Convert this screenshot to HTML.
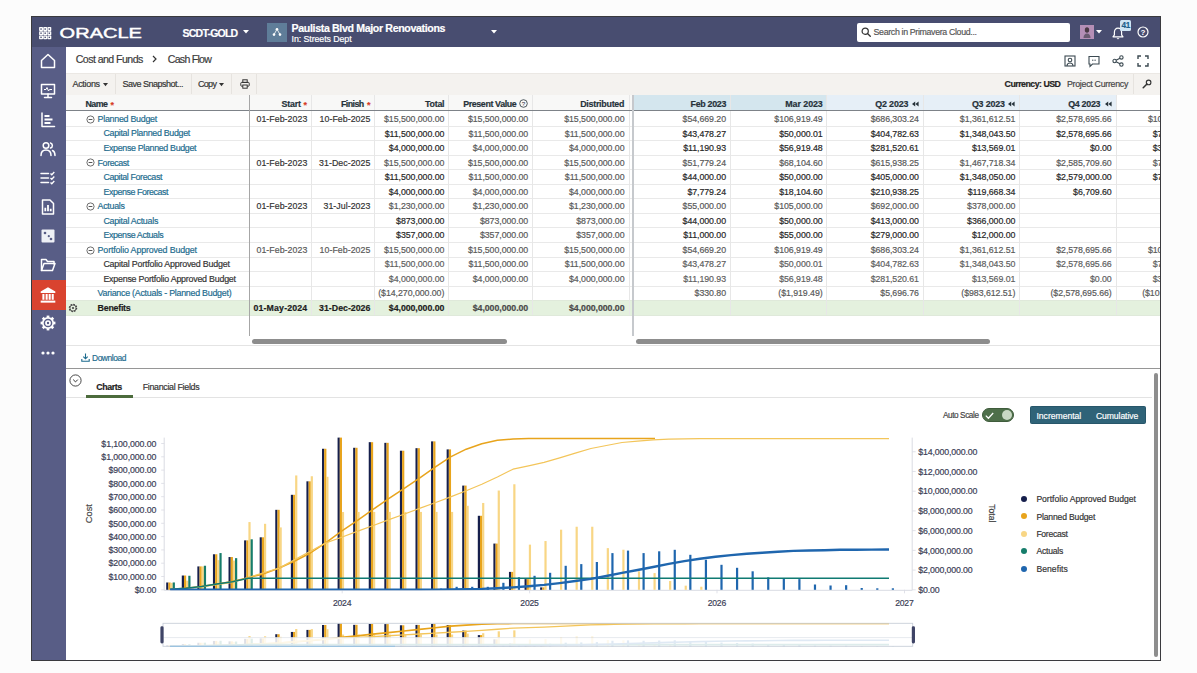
<!DOCTYPE html><html lang="en"><head><meta charset="utf-8"><title>Cash Flow - Primavera Cloud</title><style>
*{box-sizing:border-box;margin:0;padding:0}
html,body{width:1197px;height:673px;overflow:hidden;background:#fcfcfc}
body{font-family:"Liberation Sans",sans-serif;font-size:9px;color:#222;position:relative}
.abs{position:absolute}
#frame{position:absolute;left:31px;top:16px;width:1130px;height:645px;background:#fff;border:1px solid #3a3a3e;overflow:hidden}
/* coordinates inside #frame are page coords minus (32,17) */
#hdr{position:absolute;left:0;top:0;width:1128px;height:30px;background:#484d70}
#side{position:absolute;left:0;top:30px;width:33.5px;height:613px;background:#585d86}
.t{position:absolute;white-space:nowrap;line-height:1;-webkit-text-stroke:0.18px currentColor}
.r{text-align:right}
.b{font-weight:bold}
.num{letter-spacing:-0.45px}
.txt{letter-spacing:-0.28px}
.lnk{color:#1b6a8c}
svg{position:absolute;overflow:visible}
</style></head><body>
<div id="frame">
<div id="hdr"></div><div id="side"></div>
<svg style="left:6.70px;top:10.10px" width="12.4" height="12.4" viewBox="0 0 12.4 12.4" ><rect x="0.10" y="0.10" width="3.9" height="3.9" rx="0.7" fill="#fff"/><rect x="1.35" y="1.35" width="1.4" height="1.4" fill="#484d70"/><rect x="0.10" y="4.25" width="3.9" height="3.9" rx="0.7" fill="#fff"/><rect x="1.35" y="5.50" width="1.4" height="1.4" fill="#484d70"/><rect x="0.10" y="8.40" width="3.9" height="3.9" rx="0.7" fill="#fff"/><rect x="1.35" y="9.65" width="1.4" height="1.4" fill="#484d70"/><rect x="4.25" y="0.10" width="3.9" height="3.9" rx="0.7" fill="#fff"/><rect x="5.50" y="1.35" width="1.4" height="1.4" fill="#484d70"/><rect x="4.25" y="4.25" width="3.9" height="3.9" rx="0.7" fill="#fff"/><rect x="5.50" y="5.50" width="1.4" height="1.4" fill="#484d70"/><rect x="4.25" y="8.40" width="3.9" height="3.9" rx="0.7" fill="#fff"/><rect x="5.50" y="9.65" width="1.4" height="1.4" fill="#484d70"/><rect x="8.40" y="0.10" width="3.9" height="3.9" rx="0.7" fill="#fff"/><rect x="9.65" y="1.35" width="1.4" height="1.4" fill="#484d70"/><rect x="8.40" y="4.25" width="3.9" height="3.9" rx="0.7" fill="#fff"/><rect x="9.65" y="5.50" width="1.4" height="1.4" fill="#484d70"/><rect x="8.40" y="8.40" width="3.9" height="3.9" rx="0.7" fill="#fff"/><rect x="9.65" y="9.65" width="1.4" height="1.4" fill="#484d70"/></svg>
<svg style="left:27px;top:8px" width="84" height="14" viewBox="0 0 84 14"><text x="0.6" y="12.5" font-family="Liberation Sans, sans-serif" font-size="14.8" fill="#fff" stroke="#fff" stroke-width="0.45" textLength="82.4" lengthAdjust="spacingAndGlyphs">ORACLE</text></svg>
<div class="t b" style="top:10.65px;font-size:10.5px;letter-spacing:-0.779px;left:150.60px;color:#fff">SCDT-GOLD</div>
<svg style="left:211.00px;top:13.00px" width="6" height="4" viewBox="0 0 6 4" ><path d="M0 0h6l-3 3.6z" fill="#fff"/></svg>
<div class="abs" style="left:235.00px;top:5.50px;width:19.50px;height:19.00px;background:#5f7d99;"></div>
<svg style="left:239.70px;top:10.00px" width="10" height="10" viewBox="0 0 10 10" ><circle cx="5" cy="2.2" r="1.3" fill="#fff"/><circle cx="2" cy="7.6" r="1.3" fill="#fff"/><circle cx="8" cy="7.6" r="1.3" fill="#fff"/><path d="M5 2.2L2 7.6M5 2.2L8 7.6" stroke="#fff" stroke-width="0.8"/></svg>
<div class="t b" style="top:5.50px;font-size:10.6px;letter-spacing:-0.345px;left:259.60px;color:#fff">Paulista Blvd Major Renovations</div>
<div class="t " style="top:18.10px;font-size:8.8px;letter-spacing:-0.076px;left:259.60px;color:#fff">In: Streets Dept</div>
<svg style="left:459.00px;top:13.00px" width="6" height="4" viewBox="0 0 6 4" ><path d="M0 0h6l-3 3.6z" fill="#fff"/></svg>
<div class="abs" style="left:824.50px;top:5.50px;width:213.00px;height:19.00px;background:#fff;border-radius:2px"></div>
<svg style="left:828.50px;top:10.00px" width="10" height="10" viewBox="0 0 10 10" ><circle cx="4.2" cy="4.2" r="3.1" fill="none" stroke="#333" stroke-width="1.2"/><path d="M6.5 6.5L9.3 9.3" stroke="#333" stroke-width="1.3" stroke-linecap="round"/></svg>
<div class="t " style="top:11.30px;font-size:8.8px;letter-spacing:-0.337px;left:841.60px;color:#555">Search in Primavera Cloud...</div>
<div class="abs" style="left:1048.00px;top:7.50px;width:13.50px;height:14.50px;background:#b58fb6;"></div>
<svg style="left:1050.70px;top:9.00px" width="8" height="12" viewBox="0 0 8 12" ><ellipse cx="4" cy="4" rx="2.2" ry="2.8" fill="#4a3a44"/><path d="M0.5 12c0-3 1.5-4.5 3.5-4.5s3.5 1.5 3.5 4.5z" fill="#6a5a70"/></svg>
<svg style="left:1063.50px;top:13.00px" width="6" height="4" viewBox="0 0 6 4" ><path d="M0 0h6l-3 3.6z" fill="#fff"/></svg>
<svg style="left:1079.50px;top:10.00px" width="12" height="13" viewBox="0 0 12 13" ><path d="M6 1.2c-2.3 0-3.6 1.8-3.6 4v2.6L1 9.8h10L9.6 7.8V5.2c0-2.2-1.3-4-3.6-4z" fill="none" stroke="#fff" stroke-width="1.2" stroke-linejoin="round"/><path d="M4.6 11.2a1.5 1.5 0 0 0 2.8 0z" fill="#fff"/></svg>
<div class="abs" style="left:1088.00px;top:3.30px;width:11.00px;height:10.50px;background:#cfe5f4;border-radius:1.5px"></div>
<div class="t b" style="top:4.90px;font-size:8.2px;left:1089.60px;color:#1d5f8a;letter-spacing:-0.4px">41</div>
<svg style="left:1104.50px;top:9.00px" width="12" height="12" viewBox="0 0 12 12" ><circle cx="6" cy="6" r="5" fill="none" stroke="#fff" stroke-width="1.2"/><text x="6" y="9" text-anchor="middle" font-family="Liberation Sans, sans-serif" font-weight="bold" font-size="8" fill="#fff">?</text></svg>
<svg style="left:8.20px;top:36.00px" width="16" height="16" viewBox="0 0 16 16" ><path d="M1.5 7.5L8 1.5l6.5 6v7h-13z" stroke="#fff" fill="none" stroke-width="1.5" stroke-linejoin="round" stroke-linecap="round"/></svg>
<svg style="left:8.20px;top:65.50px" width="16" height="16" viewBox="0 0 16 16" ><rect x="1.5" y="1.5" width="13" height="9.5" stroke="#fff" fill="none" stroke-width="1.5" stroke-linejoin="round" stroke-linecap="round"/><path d="M8 11v3M4.5 14.5h7" stroke="#fff" fill="none" stroke-width="1.5" stroke-linejoin="round" stroke-linecap="round"/><path d="M4 6.5h2l1-2 1.5 3.5 1-1.5h2.5" stroke="#fff" fill="none" stroke-width="1"/></svg>
<svg style="left:8.20px;top:94.50px" width="16" height="16" viewBox="0 0 16 16" ><path d="M2 1v13.5h12.5" stroke="#fff" fill="none" stroke-width="1.5" stroke-linejoin="round" stroke-linecap="round"/><path d="M4.5 4h5M4.5 7.5h8M4.5 11h6" stroke="#fff" stroke-width="2" fill="none"/></svg>
<svg style="left:8.20px;top:123.50px" width="16" height="16" viewBox="0 0 16 16" ><circle cx="6" cy="4.5" r="2.8" stroke="#fff" fill="none" stroke-width="1.5" stroke-linejoin="round" stroke-linecap="round"/><path d="M1 14.5c0-3.5 2-5.5 5-5.5s5 2 5 5.5" stroke="#fff" fill="none" stroke-width="1.5" stroke-linejoin="round" stroke-linecap="round"/><path d="M10.5 2a2.6 2.6 0 0 1 0 5M12.5 9.5c1.7 0.7 2.5 2.4 2.5 5" stroke="#fff" fill="none" stroke-width="1.5" stroke-linejoin="round" stroke-linecap="round"/></svg>
<svg style="left:8.20px;top:153.00px" width="16" height="16" viewBox="0 0 16 16" ><path d="M1 3.5h7.5M1 8h7.5M1 12.5h7.5" stroke="#fff" fill="none" stroke-width="1.5" stroke-linejoin="round" stroke-linecap="round"/><path d="M10.5 3.5l1.3 1.3 2.5-2.8M10.5 8l1.3 1.3 2.5-2.8M10.5 12.5l1.3 1.3 2.5-2.8" stroke="#fff" fill="none" stroke-width="1.3"/></svg>
<svg style="left:8.20px;top:182.00px" width="16" height="16" viewBox="0 0 16 16" ><path d="M2.5 1h7.5l3.5 3.5v10.5h-11z" stroke="#fff" fill="none" stroke-width="1.5" stroke-linejoin="round" stroke-linecap="round"/><path d="M5.3 12.3v-3.6M8 12.3v-6.3M10.7 12.3v-2.6" stroke="#fff" stroke-width="1.8" fill="none"/></svg>
<svg style="left:8.20px;top:211.00px" width="16" height="16" viewBox="0 0 16 16" ><rect x="1.5" y="1.5" width="13" height="13" rx="1" fill="#eef0f6"/><circle cx="5" cy="5" r="1.3" fill="#585d86"/><circle cx="11" cy="11" r="1.3" fill="#585d86"/><circle cx="8.8" cy="8.2" r="1.1" fill="#585d86"/></svg>
<svg style="left:8.20px;top:240.00px" width="16" height="16" viewBox="0 0 16 16" ><path d="M1.5 13.5v-11h4.5l1.5 2h6.5v2.5" stroke="#fff" fill="none" stroke-width="1.5" stroke-linejoin="round" stroke-linecap="round"/><path d="M1.5 13.5l2.5-7h11l-2.5 7z" stroke="#fff" fill="none" stroke-width="1.5" stroke-linejoin="round" stroke-linecap="round"/></svg>
<div class="abs" style="left:0.00px;top:263.00px;width:33.50px;height:30.00px;background:#d9432f;"></div>
<svg style="left:7.20px;top:269.00px" width="18" height="18" viewBox="0 0 16 16" ><path d="M8 1L1.5 4.8v1.4h13V4.8z" fill="#fff"/><path d="M3 7.2h1.8v5H3zM5.9 7.2h1.8v5H5.9zM8.6 7.2h1.8v5H8.6zM11.3 7.2h1.8v5h-1.8z" fill="#fff"/><path d="M1.5 13h13v1.8h-13z" fill="#fff"/></svg>
<svg style="left:7.20px;top:297.00px" width="18" height="18" viewBox="0 0 16 16" ><path d="M12.60 8.00L14.60 8.00" stroke="#fff" stroke-width="2.4" stroke-linecap="butt"/><path d="M11.25 11.25L12.67 12.67" stroke="#fff" stroke-width="2.4" stroke-linecap="butt"/><path d="M8.00 12.60L8.00 14.60" stroke="#fff" stroke-width="2.4" stroke-linecap="butt"/><path d="M4.75 11.25L3.33 12.67" stroke="#fff" stroke-width="2.4" stroke-linecap="butt"/><path d="M3.40 8.00L1.40 8.00" stroke="#fff" stroke-width="2.4" stroke-linecap="butt"/><path d="M4.75 4.75L3.33 3.33" stroke="#fff" stroke-width="2.4" stroke-linecap="butt"/><path d="M8.00 3.40L8.00 1.40" stroke="#fff" stroke-width="2.4" stroke-linecap="butt"/><path d="M11.25 4.75L12.67 3.33" stroke="#fff" stroke-width="2.4" stroke-linecap="butt"/><circle cx="8" cy="8" r="4.6" stroke="#fff" fill="none" stroke-width="1.5" stroke-linejoin="round" stroke-linecap="round"/><circle cx="8" cy="8" r="1.8" stroke="#fff" fill="none" stroke-width="1.5" stroke-linejoin="round" stroke-linecap="round" /></svg>
<svg style="left:8.20px;top:332.50px" width="16" height="6" viewBox="0 0 16 6" ><circle cx="3" cy="3" r="1.6" fill="#fff"/><circle cx="8" cy="3" r="1.6" fill="#fff"/><circle cx="13" cy="3" r="1.6" fill="#fff"/></svg>
<div class="t " style="top:36.90px;font-size:10.6px;letter-spacing:-0.549px;left:43.70px;color:#3a3a3a">Cost and Funds</div>
<svg style="left:120.00px;top:37.50px" width="5" height="8" viewBox="0 0 5 8" ><path d="M1 1l3 3-3 3" stroke="#333" stroke-width="1.2" fill="none"/></svg>
<div class="t " style="top:36.90px;font-size:10.6px;letter-spacing:-0.746px;left:135.80px;color:#3a3a3a">Cash Flow</div>
<svg style="left:1032.00px;top:37.50px" width="12" height="12" viewBox="0 0 12 12" ><rect x="1" y="1" width="10" height="10" stroke="#3c4a52" fill="none" stroke-width="1.1"/><circle cx="6" cy="5" r="1.8" stroke="#3c4a52" fill="none" stroke-width="1.1"/><path d="M3 11c0-2 1.2-3 3-3s3 1 3 3" stroke="#3c4a52" fill="none" stroke-width="1.1"/></svg>
<svg style="left:1056.00px;top:37.50px" width="12" height="12" viewBox="0 0 12 12" ><path d="M1 1.5h10v7.5h-6.5l-2.5 2.5v-2.5h-1z" stroke="#3c4a52" fill="none" stroke-width="1.1"/><path d="M4 5.2h4" stroke="#3c4a52" stroke-width="1" stroke-dasharray="1 0.6"/></svg>
<svg style="left:1080.00px;top:37.50px" width="12" height="12" viewBox="0 0 12 12" ><circle cx="2.6" cy="6" r="1.7" stroke="#3c4a52" fill="none" stroke-width="1.1"/><circle cx="9.4" cy="2.4" r="1.7" stroke="#3c4a52" fill="none" stroke-width="1.1"/><circle cx="9.4" cy="9.6" r="1.7" stroke="#3c4a52" fill="none" stroke-width="1.1"/><path d="M4.1 5.2l3.8-2M4.1 6.8l3.8 2" stroke="#3c4a52" fill="none" stroke-width="1.1"/></svg>
<svg style="left:1104.50px;top:37.50px" width="12" height="12" viewBox="0 0 12 12" ><path d="M1 4v-3h3M8 1h3v3M11 8v3h-3M4 11h-3v-3" stroke="#3c4a52" fill="none" stroke-width="1.4"/></svg>
<div class="abs" style="left:33.50px;top:56.00px;width:1094.50px;height:21.50px;background:#f4f2ef;"></div>
<div class="abs" style="left:82.80px;top:57.00px;width:1.00px;height:20.00px;background:#e6e3df;"></div>
<div class="abs" style="left:159.30px;top:57.00px;width:1.00px;height:20.00px;background:#e6e3df;"></div>
<div class="abs" style="left:199.00px;top:57.00px;width:1.00px;height:20.00px;background:#e6e3df;"></div>
<div class="abs" style="left:224.40px;top:57.00px;width:1.00px;height:20.00px;background:#e6e3df;"></div>
<div class="abs" style="left:1100.50px;top:57.00px;width:1.00px;height:20.00px;background:#e6e3df;"></div>
<div class="abs" style="left:33.50px;top:56.00px;width:1094.50px;height:0.60px;background:#ebe8e4;"></div>
<div class="t " style="top:63.20px;font-size:9px;letter-spacing:-0.319px;left:40.50px;color:#333">Actions</div>
<svg style="left:71.00px;top:65.60px" width="5" height="3.4" viewBox="0 0 5 3.4" ><path d="M0 0h5l-2.5 3.2z" fill="#333"/></svg>
<div class="t " style="top:63.20px;font-size:9px;letter-spacing:-0.503px;left:90.40px;color:#333">Save Snapshot...</div>
<div class="t " style="top:63.20px;font-size:9px;letter-spacing:-0.737px;left:166.10px;color:#333">Copy</div>
<svg style="left:187.00px;top:65.60px" width="5" height="3.4" viewBox="0 0 5 3.4" ><path d="M0 0h5l-2.5 3.2z" fill="#333"/></svg>
<svg style="left:207.50px;top:62.00px" width="10" height="10" viewBox="0 0 10 10" ><rect x="2.8" y="0.8" width="4.4" height="2.6" stroke="#333" fill="none" stroke-width="1"/><rect x="0.8" y="3.4" width="8.4" height="3.8" rx="0.8" stroke="#333" fill="none" stroke-width="1"/><rect x="2.8" y="6" width="4.4" height="3.2" stroke="#333" fill="#f4f2ef" stroke-width="1"/></svg>
<div class="t b" style="top:63.30px;font-size:8.8px;letter-spacing:-0.516px;left:972.60px;color:#222">Currency: USD</div>
<div class="t " style="top:63.30px;font-size:8.8px;letter-spacing:-0.276px;left:1035.00px;color:#444">Project Currency</div>
<svg style="left:1110.00px;top:62.00px" width="10" height="10" viewBox="0 0 10 10" ><circle cx="6.6" cy="3.4" r="2.3" stroke="#333" fill="none" stroke-width="1.1"/><path d="M5 5L1.2 8.8" stroke="#333" stroke-width="1.5" stroke-linecap="round"/></svg>
<div class="abs" style="left:33.50px;top:77.50px;width:567.50px;height:15.80px;background:#f8f8f7;"></div>
<div class="abs" style="left:602.00px;top:77.50px;width:193.00px;height:15.80px;background:#d4e6ee;"></div>
<div class="abs" style="left:795.00px;top:77.50px;width:289.30px;height:15.80px;background:#e6eff7;"></div>
<div class="abs" style="left:33.50px;top:283.32px;width:1094.50px;height:15.04px;background:#e4f1de;"></div>
<div class="abs" style="left:33.50px;top:108.64px;width:1094.50px;height:0.80px;background:#e9e9e9;"></div>
<div class="abs" style="left:33.50px;top:123.18px;width:1094.50px;height:0.80px;background:#e9e9e9;"></div>
<div class="abs" style="left:33.50px;top:137.72px;width:1094.50px;height:0.80px;background:#e9e9e9;"></div>
<div class="abs" style="left:33.50px;top:152.26px;width:1094.50px;height:0.80px;background:#e9e9e9;"></div>
<div class="abs" style="left:33.50px;top:166.80px;width:1094.50px;height:0.80px;background:#e9e9e9;"></div>
<div class="abs" style="left:33.50px;top:181.34px;width:1094.50px;height:0.80px;background:#e9e9e9;"></div>
<div class="abs" style="left:33.50px;top:195.88px;width:1094.50px;height:0.80px;background:#e9e9e9;"></div>
<div class="abs" style="left:33.50px;top:210.42px;width:1094.50px;height:0.80px;background:#e9e9e9;"></div>
<div class="abs" style="left:33.50px;top:224.96px;width:1094.50px;height:0.80px;background:#e9e9e9;"></div>
<div class="abs" style="left:33.50px;top:239.50px;width:1094.50px;height:0.80px;background:#e9e9e9;"></div>
<div class="abs" style="left:33.50px;top:254.04px;width:1094.50px;height:0.80px;background:#e9e9e9;"></div>
<div class="abs" style="left:33.50px;top:268.58px;width:1094.50px;height:0.80px;background:#e9e9e9;"></div>
<div class="abs" style="left:33.50px;top:283.12px;width:1094.50px;height:0.80px;background:#dfe9da;"></div>
<div class="abs" style="left:33.50px;top:297.66px;width:1094.50px;height:0.80px;background:#dfe9da;"></div>
<div class="abs" style="left:278.90px;top:78.00px;width:1.00px;height:220.16px;background:#e7e7e7;"></div>
<div class="abs" style="left:342.10px;top:78.00px;width:1.00px;height:220.16px;background:#e7e7e7;"></div>
<div class="abs" style="left:415.50px;top:78.00px;width:1.00px;height:220.16px;background:#e7e7e7;"></div>
<div class="abs" style="left:499.50px;top:78.00px;width:1.00px;height:220.16px;background:#e7e7e7;"></div>
<div class="abs" style="left:596.50px;top:78.00px;width:1.00px;height:220.16px;background:#e7e7e7;"></div>
<div class="abs" style="left:697.50px;top:78.00px;width:1.00px;height:220.16px;background:#e7e7e7;"></div>
<div class="abs" style="left:794.10px;top:78.00px;width:1.00px;height:220.16px;background:#e7e7e7;"></div>
<div class="abs" style="left:890.60px;top:78.00px;width:1.00px;height:220.16px;background:#e7e7e7;"></div>
<div class="abs" style="left:987.10px;top:78.00px;width:1.00px;height:220.16px;background:#e7e7e7;"></div>
<div class="abs" style="left:1083.60px;top:78.00px;width:1.00px;height:220.16px;background:#e7e7e7;"></div>
<div class="abs" style="left:33.50px;top:92.90px;width:1094.50px;height:1.50px;background:#7d8288;"></div>
<div class="abs" style="left:217.00px;top:77.50px;width:1.00px;height:241.50px;background:#a6a6a6;"></div>
<div class="abs" style="left:600.40px;top:77.50px;width:1.20px;height:241.50px;background:#c6c9cd;"></div>
<div class="t b" style="top:82.55px;font-size:8.9px;letter-spacing:-0.647px;left:53.60px;color:#26323a">Name</div>
<div class="t b" style="top:83.80px;font-size:9px;left:78.50px;color:#d63b25">*</div>
<div class="t b" style="top:82.55px;font-size:8.9px;letter-spacing:-0.195px;left:249.50px;color:#26323a">Start</div>
<div class="t b" style="top:83.80px;font-size:9px;left:271.60px;color:#d63b25">*</div>
<div class="t b" style="top:82.55px;font-size:8.9px;letter-spacing:-0.581px;left:309.00px;color:#26323a">Finish</div>
<div class="t b" style="top:83.80px;font-size:9px;left:334.90px;color:#d63b25">*</div>
<div class="t b" style="top:82.55px;font-size:8.9px;letter-spacing:-0.275px;left:393.10px;color:#26323a">Total</div>
<div class="t b" style="top:82.55px;font-size:8.9px;letter-spacing:-0.390px;left:431.20px;color:#26323a">Present Value</div>
<svg style="left:486.50px;top:81.80px" width="9" height="9" viewBox="0 0 9 9" ><circle cx="4.5" cy="4.5" r="3.8" fill="none" stroke="#26323a" stroke-width="0.8"/><text x="4.5" y="6.8" text-anchor="middle" font-family="Liberation Sans, sans-serif" font-size="6.2" fill="#26323a">?</text></svg>
<div class="t b" style="top:82.55px;font-size:8.9px;letter-spacing:-0.257px;left:548.20px;color:#26323a">Distributed</div>
<div class="t b" style="top:82.55px;font-size:8.9px;letter-spacing:-0.314px;left:658.60px;color:#26323a">Feb 2023</div>
<div class="t b" style="top:82.55px;font-size:8.9px;letter-spacing:-0.071px;left:753.30px;color:#26323a">Mar 2023</div>
<div class="t b" style="top:82.55px;font-size:8.9px;letter-spacing:-0.124px;left:843.20px;color:#26323a">Q2 2023</div>
<svg style="left:880.00px;top:83.80px" width="7" height="6" viewBox="0 0 7 6" ><path d="M3.2 0.6v4.8L0 3zM6.6 0.6v4.8L3.4 3z" fill="#26323a"/></svg>
<div class="t b" style="top:82.55px;font-size:8.9px;letter-spacing:-0.174px;left:939.90px;color:#26323a">Q3 2023</div>
<svg style="left:976.30px;top:83.80px" width="7" height="6" viewBox="0 0 7 6" ><path d="M3.2 0.6v4.8L0 3zM6.6 0.6v4.8L3.4 3z" fill="#26323a"/></svg>
<div class="t b" style="top:82.55px;font-size:8.9px;letter-spacing:-0.291px;left:1036.20px;color:#26323a">Q4 2023</div>
<svg style="left:1072.70px;top:83.80px" width="7" height="6" viewBox="0 0 7 6" ><path d="M3.2 0.6v4.8L0 3zM6.6 0.6v4.8L3.4 3z" fill="#26323a"/></svg>
<div class="t " style="top:97.92px;font-size:8.9px;letter-spacing:-0.273px;left:65.60px;color:#1c6b8e">Planned Budget</div>
<svg style="left:54.10px;top:97.87px" width="9" height="9" viewBox="0 0 9 9" ><circle cx="4.5" cy="4.5" r="3.6" fill="#fff" stroke="#555" stroke-width="0.85"/><path d="M2.6 4.5h3.8" stroke="#444" stroke-width="0.9"/></svg>
<div class="t " style="top:97.97px;font-size:8.8px;right:852.70px;color:#333;letter-spacing:0.04px">01-Feb-2023</div>
<div class="t " style="top:97.97px;font-size:8.8px;right:789.60px;color:#333;letter-spacing:0.04px">10-Feb-2025</div>
<div class="t " style="top:97.97px;font-size:8.8px;right:715.70px;color:#595959;letter-spacing:-0.06px">$15,500,000.00</div>
<div class="t " style="top:97.97px;font-size:8.8px;right:631.80px;color:#595959;letter-spacing:-0.06px">$15,500,000.00</div>
<div class="t " style="top:97.97px;font-size:8.8px;right:535.50px;color:#595959;letter-spacing:-0.06px">$15,500,000.00</div>
<div class="t " style="top:97.97px;font-size:8.8px;right:434.00px;color:#595959;letter-spacing:-0.06px">$54,669.20</div>
<div class="t " style="top:97.97px;font-size:8.8px;right:337.40px;color:#595959;letter-spacing:-0.06px">$106,919.49</div>
<div class="t " style="top:97.97px;font-size:8.8px;right:241.10px;color:#595959;letter-spacing:-0.06px">$686,303.24</div>
<div class="t " style="top:97.97px;font-size:8.8px;right:144.70px;color:#595959;letter-spacing:-0.06px">$1,361,612.51</div>
<div class="t " style="top:97.97px;font-size:8.8px;right:48.30px;color:#595959;letter-spacing:-0.06px">$2,578,695.66</div>
<div class="t " style="top:97.97px;font-size:8.8px;right:-48.20px;color:#595959;letter-spacing:-0.06px">$10,712,299.90</div>
<div class="t " style="top:112.46px;font-size:8.9px;letter-spacing:-0.301px;left:71.40px;color:#1c6b8e">Capital Planned Budget</div>
<div class="t " style="top:112.51px;font-size:8.8px;right:715.70px;color:#262626;letter-spacing:-0.06px">$11,500,000.00</div>
<div class="t " style="top:112.51px;font-size:8.8px;right:631.80px;color:#595959;letter-spacing:-0.06px">$11,500,000.00</div>
<div class="t " style="top:112.51px;font-size:8.8px;right:535.50px;color:#595959;letter-spacing:-0.06px">$11,500,000.00</div>
<div class="t " style="top:112.51px;font-size:8.8px;right:434.00px;color:#262626;letter-spacing:-0.06px">$43,478.27</div>
<div class="t " style="top:112.51px;font-size:8.8px;right:337.40px;color:#262626;letter-spacing:-0.06px">$50,000.01</div>
<div class="t " style="top:112.51px;font-size:8.8px;right:241.10px;color:#262626;letter-spacing:-0.06px">$404,782.63</div>
<div class="t " style="top:112.51px;font-size:8.8px;right:144.70px;color:#262626;letter-spacing:-0.06px">$1,348,043.50</div>
<div class="t " style="top:112.51px;font-size:8.8px;right:48.30px;color:#262626;letter-spacing:-0.06px">$2,578,695.66</div>
<div class="t " style="top:112.51px;font-size:8.8px;right:-48.20px;color:#262626;letter-spacing:-0.06px">$7,074,999.93</div>
<div class="t " style="top:127.00px;font-size:8.9px;letter-spacing:-0.336px;left:71.40px;color:#1c6b8e">Expense Planned Budget</div>
<div class="t " style="top:127.05px;font-size:8.8px;right:715.70px;color:#262626;letter-spacing:-0.06px">$4,000,000.00</div>
<div class="t " style="top:127.05px;font-size:8.8px;right:631.80px;color:#595959;letter-spacing:-0.06px">$4,000,000.00</div>
<div class="t " style="top:127.05px;font-size:8.8px;right:535.50px;color:#595959;letter-spacing:-0.06px">$4,000,000.00</div>
<div class="t " style="top:127.05px;font-size:8.8px;right:434.00px;color:#262626;letter-spacing:-0.06px">$11,190.93</div>
<div class="t " style="top:127.05px;font-size:8.8px;right:337.40px;color:#262626;letter-spacing:-0.06px">$56,919.48</div>
<div class="t " style="top:127.05px;font-size:8.8px;right:241.10px;color:#262626;letter-spacing:-0.06px">$281,520.61</div>
<div class="t " style="top:127.05px;font-size:8.8px;right:144.70px;color:#262626;letter-spacing:-0.06px">$13,569.01</div>
<div class="t " style="top:127.05px;font-size:8.8px;right:48.30px;color:#262626;letter-spacing:-0.06px">$0.00</div>
<div class="t " style="top:127.05px;font-size:8.8px;right:-48.20px;color:#262626;letter-spacing:-0.06px">$3,636,799.97</div>
<div class="t " style="top:141.54px;font-size:8.9px;letter-spacing:-0.403px;left:65.60px;color:#1c6b8e">Forecast</div>
<svg style="left:54.10px;top:141.49px" width="9" height="9" viewBox="0 0 9 9" ><circle cx="4.5" cy="4.5" r="3.6" fill="#fff" stroke="#555" stroke-width="0.85"/><path d="M2.6 4.5h3.8" stroke="#444" stroke-width="0.9"/></svg>
<div class="t " style="top:141.59px;font-size:8.8px;right:852.70px;color:#333;letter-spacing:0.04px">01-Feb-2023</div>
<div class="t " style="top:141.59px;font-size:8.8px;right:789.60px;color:#333;letter-spacing:0.04px">31-Dec-2025</div>
<div class="t " style="top:141.59px;font-size:8.8px;right:715.70px;color:#595959;letter-spacing:-0.06px">$15,500,000.00</div>
<div class="t " style="top:141.59px;font-size:8.8px;right:631.80px;color:#595959;letter-spacing:-0.06px">$15,500,000.00</div>
<div class="t " style="top:141.59px;font-size:8.8px;right:535.50px;color:#595959;letter-spacing:-0.06px">$15,500,000.00</div>
<div class="t " style="top:141.59px;font-size:8.8px;right:434.00px;color:#595959;letter-spacing:-0.06px">$51,779.24</div>
<div class="t " style="top:141.59px;font-size:8.8px;right:337.40px;color:#595959;letter-spacing:-0.06px">$68,104.60</div>
<div class="t " style="top:141.59px;font-size:8.8px;right:241.10px;color:#595959;letter-spacing:-0.06px">$615,938.25</div>
<div class="t " style="top:141.59px;font-size:8.8px;right:144.70px;color:#595959;letter-spacing:-0.06px">$1,467,718.34</div>
<div class="t " style="top:141.59px;font-size:8.8px;right:48.30px;color:#595959;letter-spacing:-0.06px">$2,585,709.60</div>
<div class="t " style="top:141.59px;font-size:8.8px;right:-48.20px;color:#595959;letter-spacing:-0.06px">$7,476,412.85</div>
<div class="t " style="top:156.08px;font-size:8.9px;letter-spacing:-0.373px;left:71.40px;color:#1c6b8e">Capital Forecast</div>
<div class="t " style="top:156.13px;font-size:8.8px;right:715.70px;color:#262626;letter-spacing:-0.06px">$11,500,000.00</div>
<div class="t " style="top:156.13px;font-size:8.8px;right:631.80px;color:#595959;letter-spacing:-0.06px">$11,500,000.00</div>
<div class="t " style="top:156.13px;font-size:8.8px;right:535.50px;color:#595959;letter-spacing:-0.06px">$11,500,000.00</div>
<div class="t " style="top:156.13px;font-size:8.8px;right:434.00px;color:#262626;letter-spacing:-0.06px">$44,000.00</div>
<div class="t " style="top:156.13px;font-size:8.8px;right:337.40px;color:#262626;letter-spacing:-0.06px">$50,000.00</div>
<div class="t " style="top:156.13px;font-size:8.8px;right:241.10px;color:#262626;letter-spacing:-0.06px">$405,000.00</div>
<div class="t " style="top:156.13px;font-size:8.8px;right:144.70px;color:#262626;letter-spacing:-0.06px">$1,348,050.00</div>
<div class="t " style="top:156.13px;font-size:8.8px;right:48.30px;color:#262626;letter-spacing:-0.06px">$2,579,000.00</div>
<div class="t " style="top:156.13px;font-size:8.8px;right:-48.20px;color:#262626;letter-spacing:-0.06px">$7,073,950.00</div>
<div class="t " style="top:170.62px;font-size:8.9px;letter-spacing:-0.429px;left:71.40px;color:#1c6b8e">Expense Forecast</div>
<div class="t " style="top:170.67px;font-size:8.8px;right:715.70px;color:#262626;letter-spacing:-0.06px">$4,000,000.00</div>
<div class="t " style="top:170.67px;font-size:8.8px;right:631.80px;color:#595959;letter-spacing:-0.06px">$4,000,000.00</div>
<div class="t " style="top:170.67px;font-size:8.8px;right:535.50px;color:#595959;letter-spacing:-0.06px">$4,000,000.00</div>
<div class="t " style="top:170.67px;font-size:8.8px;right:434.00px;color:#262626;letter-spacing:-0.06px">$7,779.24</div>
<div class="t " style="top:170.67px;font-size:8.8px;right:337.40px;color:#262626;letter-spacing:-0.06px">$18,104.60</div>
<div class="t " style="top:170.67px;font-size:8.8px;right:241.10px;color:#262626;letter-spacing:-0.06px">$210,938.25</div>
<div class="t " style="top:170.67px;font-size:8.8px;right:144.70px;color:#262626;letter-spacing:-0.06px">$119,668.34</div>
<div class="t " style="top:170.67px;font-size:8.8px;right:48.30px;color:#262626;letter-spacing:-0.06px">$6,709.60</div>
<div class="t " style="top:185.16px;font-size:8.9px;letter-spacing:-0.298px;left:65.60px;color:#1c6b8e">Actuals</div>
<svg style="left:54.10px;top:185.11px" width="9" height="9" viewBox="0 0 9 9" ><circle cx="4.5" cy="4.5" r="3.6" fill="#fff" stroke="#555" stroke-width="0.85"/><path d="M2.6 4.5h3.8" stroke="#444" stroke-width="0.9"/></svg>
<div class="t " style="top:185.21px;font-size:8.8px;right:852.70px;color:#333;letter-spacing:0.04px">01-Feb-2023</div>
<div class="t " style="top:185.21px;font-size:8.8px;right:789.60px;color:#333;letter-spacing:0.04px">31-Jul-2023</div>
<div class="t " style="top:185.21px;font-size:8.8px;right:715.70px;color:#595959;letter-spacing:-0.06px">$1,230,000.00</div>
<div class="t " style="top:185.21px;font-size:8.8px;right:631.80px;color:#595959;letter-spacing:-0.06px">$1,230,000.00</div>
<div class="t " style="top:185.21px;font-size:8.8px;right:535.50px;color:#595959;letter-spacing:-0.06px">$1,230,000.00</div>
<div class="t " style="top:185.21px;font-size:8.8px;right:434.00px;color:#595959;letter-spacing:-0.06px">$55,000.00</div>
<div class="t " style="top:185.21px;font-size:8.8px;right:337.40px;color:#595959;letter-spacing:-0.06px">$105,000.00</div>
<div class="t " style="top:185.21px;font-size:8.8px;right:241.10px;color:#595959;letter-spacing:-0.06px">$692,000.00</div>
<div class="t " style="top:185.21px;font-size:8.8px;right:144.70px;color:#595959;letter-spacing:-0.06px">$378,000.00</div>
<div class="t " style="top:199.70px;font-size:8.9px;letter-spacing:-0.269px;left:71.40px;color:#1c6b8e">Capital Actuals</div>
<div class="t " style="top:199.75px;font-size:8.8px;right:715.70px;color:#262626;letter-spacing:-0.06px">$873,000.00</div>
<div class="t " style="top:199.75px;font-size:8.8px;right:631.80px;color:#595959;letter-spacing:-0.06px">$873,000.00</div>
<div class="t " style="top:199.75px;font-size:8.8px;right:535.50px;color:#595959;letter-spacing:-0.06px">$873,000.00</div>
<div class="t " style="top:199.75px;font-size:8.8px;right:434.00px;color:#262626;letter-spacing:-0.06px">$44,000.00</div>
<div class="t " style="top:199.75px;font-size:8.8px;right:337.40px;color:#262626;letter-spacing:-0.06px">$50,000.00</div>
<div class="t " style="top:199.75px;font-size:8.8px;right:241.10px;color:#262626;letter-spacing:-0.06px">$413,000.00</div>
<div class="t " style="top:199.75px;font-size:8.8px;right:144.70px;color:#262626;letter-spacing:-0.06px">$366,000.00</div>
<div class="t " style="top:214.24px;font-size:8.9px;letter-spacing:-0.379px;left:71.40px;color:#1c6b8e">Expense Actuals</div>
<div class="t " style="top:214.29px;font-size:8.8px;right:715.70px;color:#262626;letter-spacing:-0.06px">$357,000.00</div>
<div class="t " style="top:214.29px;font-size:8.8px;right:631.80px;color:#595959;letter-spacing:-0.06px">$357,000.00</div>
<div class="t " style="top:214.29px;font-size:8.8px;right:535.50px;color:#595959;letter-spacing:-0.06px">$357,000.00</div>
<div class="t " style="top:214.29px;font-size:8.8px;right:434.00px;color:#262626;letter-spacing:-0.06px">$11,000.00</div>
<div class="t " style="top:214.29px;font-size:8.8px;right:337.40px;color:#262626;letter-spacing:-0.06px">$55,000.00</div>
<div class="t " style="top:214.29px;font-size:8.8px;right:241.10px;color:#262626;letter-spacing:-0.06px">$279,000.00</div>
<div class="t " style="top:214.29px;font-size:8.8px;right:144.70px;color:#262626;letter-spacing:-0.06px">$12,000.00</div>
<div class="t " style="top:228.78px;font-size:8.9px;letter-spacing:-0.151px;left:65.60px;color:#1c6b8e">Portfolio Approved Budget</div>
<svg style="left:54.10px;top:228.73px" width="9" height="9" viewBox="0 0 9 9" ><circle cx="4.5" cy="4.5" r="3.6" fill="#fff" stroke="#555" stroke-width="0.85"/><path d="M2.6 4.5h3.8" stroke="#444" stroke-width="0.9"/></svg>
<div class="t " style="top:228.83px;font-size:8.8px;right:852.70px;color:#595959;letter-spacing:0.04px">01-Feb-2023</div>
<div class="t " style="top:228.83px;font-size:8.8px;right:789.60px;color:#595959;letter-spacing:0.04px">10-Feb-2025</div>
<div class="t " style="top:228.83px;font-size:8.8px;right:715.70px;color:#595959;letter-spacing:-0.06px">$15,500,000.00</div>
<div class="t " style="top:228.83px;font-size:8.8px;right:631.80px;color:#595959;letter-spacing:-0.06px">$15,500,000.00</div>
<div class="t " style="top:228.83px;font-size:8.8px;right:535.50px;color:#595959;letter-spacing:-0.06px">$15,500,000.00</div>
<div class="t " style="top:228.83px;font-size:8.8px;right:434.00px;color:#595959;letter-spacing:-0.06px">$54,669.20</div>
<div class="t " style="top:228.83px;font-size:8.8px;right:337.40px;color:#595959;letter-spacing:-0.06px">$106,919.49</div>
<div class="t " style="top:228.83px;font-size:8.8px;right:241.10px;color:#595959;letter-spacing:-0.06px">$686,303.24</div>
<div class="t " style="top:228.83px;font-size:8.8px;right:144.70px;color:#595959;letter-spacing:-0.06px">$1,361,612.51</div>
<div class="t " style="top:228.83px;font-size:8.8px;right:48.30px;color:#595959;letter-spacing:-0.06px">$2,578,695.66</div>
<div class="t " style="top:228.83px;font-size:8.8px;right:-48.20px;color:#595959;letter-spacing:-0.06px">$10,712,299.90</div>
<div class="t " style="top:243.32px;font-size:8.9px;letter-spacing:-0.209px;left:71.40px;color:#333">Capital Portfolio Approved Budget</div>
<div class="t " style="top:243.37px;font-size:8.8px;right:715.70px;color:#5e5e5e;letter-spacing:-0.06px">$11,500,000.00</div>
<div class="t " style="top:243.37px;font-size:8.8px;right:631.80px;color:#595959;letter-spacing:-0.06px">$11,500,000.00</div>
<div class="t " style="top:243.37px;font-size:8.8px;right:535.50px;color:#595959;letter-spacing:-0.06px">$11,500,000.00</div>
<div class="t " style="top:243.37px;font-size:8.8px;right:434.00px;color:#5e5e5e;letter-spacing:-0.06px">$43,478.27</div>
<div class="t " style="top:243.37px;font-size:8.8px;right:337.40px;color:#5e5e5e;letter-spacing:-0.06px">$50,000.01</div>
<div class="t " style="top:243.37px;font-size:8.8px;right:241.10px;color:#5e5e5e;letter-spacing:-0.06px">$404,782.63</div>
<div class="t " style="top:243.37px;font-size:8.8px;right:144.70px;color:#5e5e5e;letter-spacing:-0.06px">$1,348,043.50</div>
<div class="t " style="top:243.37px;font-size:8.8px;right:48.30px;color:#5e5e5e;letter-spacing:-0.06px">$2,578,695.66</div>
<div class="t " style="top:243.37px;font-size:8.8px;right:-48.20px;color:#5e5e5e;letter-spacing:-0.06px">$7,074,999.93</div>
<div class="t " style="top:257.86px;font-size:8.9px;letter-spacing:-0.235px;left:71.40px;color:#333">Expense Portfolio Approved Budget</div>
<div class="t " style="top:257.91px;font-size:8.8px;right:715.70px;color:#5e5e5e;letter-spacing:-0.06px">$4,000,000.00</div>
<div class="t " style="top:257.91px;font-size:8.8px;right:631.80px;color:#595959;letter-spacing:-0.06px">$4,000,000.00</div>
<div class="t " style="top:257.91px;font-size:8.8px;right:535.50px;color:#595959;letter-spacing:-0.06px">$4,000,000.00</div>
<div class="t " style="top:257.91px;font-size:8.8px;right:434.00px;color:#5e5e5e;letter-spacing:-0.06px">$11,190.93</div>
<div class="t " style="top:257.91px;font-size:8.8px;right:337.40px;color:#5e5e5e;letter-spacing:-0.06px">$56,919.48</div>
<div class="t " style="top:257.91px;font-size:8.8px;right:241.10px;color:#5e5e5e;letter-spacing:-0.06px">$281,520.61</div>
<div class="t " style="top:257.91px;font-size:8.8px;right:144.70px;color:#5e5e5e;letter-spacing:-0.06px">$13,569.01</div>
<div class="t " style="top:257.91px;font-size:8.8px;right:48.30px;color:#5e5e5e;letter-spacing:-0.06px">$0.00</div>
<div class="t " style="top:257.91px;font-size:8.8px;right:-48.20px;color:#5e5e5e;letter-spacing:-0.06px">$3,636,799.97</div>
<div class="t " style="top:272.40px;font-size:8.9px;letter-spacing:-0.262px;left:65.60px;color:#1c6b8e">Variance (Actuals - Planned Budget)</div>
<div class="t " style="top:272.45px;font-size:8.8px;right:715.70px;color:#595959;letter-spacing:-0.06px">($14,270,000.00)</div>
<div class="t " style="top:272.45px;font-size:8.8px;right:434.00px;color:#595959;letter-spacing:-0.06px">$330.80</div>
<div class="t " style="top:272.45px;font-size:8.8px;right:337.40px;color:#595959;letter-spacing:-0.06px">($1,919.49)</div>
<div class="t " style="top:272.45px;font-size:8.8px;right:241.10px;color:#595959;letter-spacing:-0.06px">$5,696.76</div>
<div class="t " style="top:272.45px;font-size:8.8px;right:144.70px;color:#595959;letter-spacing:-0.06px">($983,612.51)</div>
<div class="t " style="top:272.45px;font-size:8.8px;right:48.30px;color:#595959;letter-spacing:-0.06px">($2,578,695.66)</div>
<div class="t " style="top:272.45px;font-size:8.8px;right:-48.20px;color:#595959;letter-spacing:-0.06px">($10,712,299.90)</div>
<div class="t b" style="top:286.94px;font-size:8.9px;letter-spacing:-0.274px;left:65.60px;color:#1d1d1d">Benefits</div>
<svg style="left:35.60px;top:286.19px" width="10" height="10" viewBox="0 0 10 10" ><circle cx="5" cy="5" r="3.6" fill="none" stroke="#444" stroke-width="1.3" stroke-dasharray="1.6 1.2"/><circle cx="5" cy="5" r="3.1" fill="none" stroke="#444" stroke-width="0.8"/><circle cx="5" cy="5" r="1.1" fill="#444"/></svg>
<div class="t b" style="top:286.99px;font-size:8.8px;letter-spacing:0.135px;left:221.50px;color:#1d1d1d">01-May-2024</div>
<div class="t b" style="top:286.99px;font-size:8.8px;letter-spacing:-0.007px;left:287.10px;color:#1d1d1d">31-Dec-2026</div>
<div class="t b" style="top:286.99px;font-size:8.8px;right:715.70px;color:#1d1d1d;letter-spacing:-0.06px">$4,000,000.00</div>
<div class="t b" style="top:286.99px;font-size:8.8px;right:631.80px;color:#4a4a4a;letter-spacing:-0.06px">$4,000,000.00</div>
<div class="t b" style="top:286.99px;font-size:8.8px;right:535.50px;color:#4a4a4a;letter-spacing:-0.06px">$4,000,000.00</div>
<div class="abs" style="left:220.00px;top:321.80px;width:255.40px;height:5.00px;background:#8d8d8d;border-radius:2.5px"></div>
<div class="abs" style="left:603.60px;top:321.80px;width:354.90px;height:5.00px;background:#8d8d8d;border-radius:2.5px"></div>
<div class="abs" style="left:33.50px;top:328.20px;width:1094.50px;height:0.80px;background:#e4e4e4;"></div>
<svg style="left:48.50px;top:335.80px" width="9" height="9" viewBox="0 0 9 9" ><path d="M4.5 0.5v5M2.3 3.6l2.2 2.2 2.2-2.2" stroke="#1c6b8e" fill="none" stroke-width="1.1"/><path d="M0.8 6v2.3h7.4V6" stroke="#1c6b8e" fill="none" stroke-width="1.1"/></svg>
<div class="t " style="top:337.20px;font-size:8.4px;letter-spacing:-0.423px;left:60.00px;color:#1c6b8e">Download</div>
<div class="abs" style="left:33.50px;top:350.60px;width:1094.50px;height:1.60px;background:#969696;"></div>
<svg style="left:37.00px;top:356.50px" width="13" height="13" viewBox="0 0 13 13" ><circle cx="6.5" cy="6.5" r="5.6" fill="none" stroke="#333" stroke-width="0.9"/><path d="M4.2 5.6l2.3 2.3 2.3-2.3" fill="none" stroke="#333" stroke-width="1"/></svg>
<div class="t b" style="top:365.55px;font-size:8.9px;letter-spacing:-0.458px;left:64.30px;color:#222">Charts</div>
<div class="t " style="top:365.55px;font-size:8.9px;letter-spacing:-0.316px;left:110.70px;color:#333">Financial Fields</div>
<div class="abs" style="left:33.50px;top:380.20px;width:1086.50px;height:0.80px;background:#e3e3e3;"></div>
<div class="abs" style="left:53.80px;top:378.40px;width:46.90px;height:2.20px;background:#4c6b3c;"></div>
<div class="abs" style="left:1122.20px;top:356.00px;width:3.80px;height:283.50px;background:#8e8e8e;border-radius:2px"></div>
<div class="t " style="top:394.60px;font-size:8.2px;letter-spacing:-0.407px;left:911.00px;color:#444">Auto Scale</div>
<div class="abs" style="left:950.00px;top:391.00px;width:32.00px;height:14.30px;background:#4e6f4a;border-radius:7.2px;border:1px solid #3f5c3c"></div>
<svg style="left:953.00px;top:394.70px" width="9" height="7" viewBox="0 0 9 7" ><path d="M0.8 3.6l2.6 2.6 4.8-5.2" fill="none" stroke="#fff" stroke-width="1.3"/></svg>
<div class="abs" style="left:969.6px;top:393px;width:10.4px;height:10.4px;border-radius:50%;background:#c9d8c4"></div>
<div class="abs" style="left:997.60px;top:388.90px;width:116.40px;height:18.40px;background:#2f6378;border-radius:1.5px;border:1px solid #27566a"></div>
<div class="t " style="top:394.60px;font-size:8.6px;letter-spacing:-0.023px;left:1004.50px;color:#fff">Incremental</div>
<div class="t " style="top:394.60px;font-size:8.6px;letter-spacing:-0.069px;left:1063.90px;color:#fff">Cumulative</div>
<svg style="left:-32px;top:-17px" width="1197" height="673" viewBox="0 0 1197 673"><defs><clipPath id="plotclip"><rect x="150" y="436.6" width="780" height="153.70"/></clipPath></defs><path d="M164.2 437.6V590.3H912.2V437.6" fill="none" stroke="#d9dbe3" stroke-width="1"/><path d="M161.2 589.80h3" stroke="#d9dbe3" stroke-width="0.8"/><path d="M161.2 576.50h3" stroke="#d9dbe3" stroke-width="0.8"/><path d="M161.2 563.20h3" stroke="#d9dbe3" stroke-width="0.8"/><path d="M161.2 549.90h3" stroke="#d9dbe3" stroke-width="0.8"/><path d="M161.2 536.60h3" stroke="#d9dbe3" stroke-width="0.8"/><path d="M161.2 523.30h3" stroke="#d9dbe3" stroke-width="0.8"/><path d="M161.2 510.00h3" stroke="#d9dbe3" stroke-width="0.8"/><path d="M161.2 496.70h3" stroke="#d9dbe3" stroke-width="0.8"/><path d="M161.2 483.40h3" stroke="#d9dbe3" stroke-width="0.8"/><path d="M161.2 470.10h3" stroke="#d9dbe3" stroke-width="0.8"/><path d="M161.2 456.80h3" stroke="#d9dbe3" stroke-width="0.8"/><path d="M161.2 443.50h3" stroke="#d9dbe3" stroke-width="0.8"/><path d="M912.2 589.80h3.5" stroke="#d9dbe3" stroke-width="0.8"/><path d="M912.2 570.08h3.5" stroke="#d9dbe3" stroke-width="0.8"/><path d="M912.2 550.36h3.5" stroke="#d9dbe3" stroke-width="0.8"/><path d="M912.2 530.64h3.5" stroke="#d9dbe3" stroke-width="0.8"/><path d="M912.2 510.92h3.5" stroke="#d9dbe3" stroke-width="0.8"/><path d="M912.2 491.20h3.5" stroke="#d9dbe3" stroke-width="0.8"/><path d="M912.2 471.48h3.5" stroke="#d9dbe3" stroke-width="0.8"/><path d="M912.2 451.76h3.5" stroke="#d9dbe3" stroke-width="0.8"/><path d="M342.2 589.8v3.5" stroke="#d9dbe3" stroke-width="0.8"/><path d="M529.6 589.8v3.5" stroke="#d9dbe3" stroke-width="0.8"/><path d="M717 589.8v3.5" stroke="#d9dbe3" stroke-width="0.8"/><path d="M904.5 589.8v3.5" stroke="#d9dbe3" stroke-width="0.8"/><g clip-path="url(#plotclip)"><rect x="166.20" y="582.49" width="2.20" height="7.31" fill="#161f4c"/><rect x="181.78" y="575.52" width="2.20" height="14.28" fill="#161f4c"/><rect x="197.36" y="566.42" width="2.20" height="23.38" fill="#161f4c"/><rect x="212.94" y="554.26" width="2.20" height="35.54" fill="#161f4c"/><rect x="228.52" y="557.03" width="2.20" height="32.77" fill="#161f4c"/><rect x="244.10" y="540.37" width="2.20" height="49.43" fill="#161f4c"/><rect x="259.68" y="537.30" width="2.20" height="52.50" fill="#161f4c"/><rect x="275.26" y="509.83" width="2.20" height="79.97" fill="#161f4c"/><rect x="290.84" y="494.81" width="2.20" height="94.99" fill="#161f4c"/><rect x="306.42" y="481.32" width="2.20" height="108.48" fill="#161f4c"/><rect x="322.00" y="448.76" width="2.20" height="141.04" fill="#161f4c"/><rect x="337.58" y="437.60" width="2.20" height="152.20" fill="#161f4c"/><rect x="353.16" y="447.78" width="2.20" height="142.02" fill="#161f4c"/><rect x="368.74" y="442.17" width="2.20" height="147.63" fill="#161f4c"/><rect x="384.32" y="442.84" width="2.20" height="146.96" fill="#161f4c"/><rect x="399.90" y="450.72" width="2.20" height="139.08" fill="#161f4c"/><rect x="415.48" y="448.18" width="2.20" height="141.62" fill="#161f4c"/><rect x="431.06" y="441.37" width="2.20" height="148.43" fill="#161f4c"/><rect x="446.64" y="449.39" width="2.20" height="140.41" fill="#161f4c"/><rect x="462.22" y="485.59" width="2.20" height="104.21" fill="#161f4c"/><rect x="477.80" y="515.79" width="2.20" height="74.01" fill="#161f4c"/><rect x="493.38" y="543.57" width="2.20" height="46.23" fill="#161f4c"/><rect x="508.96" y="571.90" width="2.20" height="17.90" fill="#161f4c"/><rect x="524.54" y="579.11" width="2.20" height="10.69" fill="#161f4c"/><rect x="540.12" y="587.40" width="2.20" height="2.40" fill="#161f4c"/><rect x="168.40" y="582.49" width="2.20" height="7.31" fill="#e8a41c"/><rect x="183.98" y="575.52" width="2.20" height="14.28" fill="#e8a41c"/><rect x="199.56" y="566.42" width="2.20" height="23.38" fill="#e8a41c"/><rect x="215.14" y="554.26" width="2.20" height="35.54" fill="#e8a41c"/><rect x="230.72" y="557.03" width="2.20" height="32.77" fill="#e8a41c"/><rect x="246.30" y="540.37" width="2.20" height="49.43" fill="#e8a41c"/><rect x="261.88" y="537.30" width="2.20" height="52.50" fill="#e8a41c"/><rect x="277.46" y="509.83" width="2.20" height="79.97" fill="#e8a41c"/><rect x="293.04" y="494.81" width="2.20" height="94.99" fill="#e8a41c"/><rect x="308.62" y="481.32" width="2.20" height="108.48" fill="#e8a41c"/><rect x="324.20" y="448.76" width="2.20" height="141.04" fill="#e8a41c"/><rect x="339.78" y="437.60" width="2.20" height="152.20" fill="#e8a41c"/><rect x="355.36" y="447.78" width="2.20" height="142.02" fill="#e8a41c"/><rect x="370.94" y="442.17" width="2.20" height="147.63" fill="#e8a41c"/><rect x="386.52" y="442.84" width="2.20" height="146.96" fill="#e8a41c"/><rect x="402.10" y="450.72" width="2.20" height="139.08" fill="#e8a41c"/><rect x="417.68" y="448.18" width="2.20" height="141.62" fill="#e8a41c"/><rect x="433.26" y="441.37" width="2.20" height="148.43" fill="#e8a41c"/><rect x="448.84" y="449.39" width="2.20" height="140.41" fill="#e8a41c"/><rect x="464.42" y="485.59" width="2.20" height="104.21" fill="#e8a41c"/><rect x="480.00" y="515.79" width="2.20" height="74.01" fill="#e8a41c"/><rect x="495.58" y="543.57" width="2.20" height="46.23" fill="#e8a41c"/><rect x="511.16" y="571.90" width="2.20" height="17.90" fill="#e8a41c"/><rect x="526.74" y="579.11" width="2.20" height="10.69" fill="#e8a41c"/><rect x="542.32" y="587.40" width="2.20" height="2.40" fill="#e8a41c"/><rect x="170.50" y="582.88" width="2.20" height="6.92" fill="#f8d685"/><rect x="186.08" y="580.70" width="2.20" height="9.10" fill="#f8d685"/><rect x="201.66" y="566.42" width="2.20" height="23.38" fill="#f8d685"/><rect x="217.24" y="560.14" width="2.20" height="29.66" fill="#f8d685"/><rect x="232.82" y="560.54" width="2.20" height="29.26" fill="#f8d685"/><rect x="248.40" y="522.06" width="2.20" height="67.74" fill="#f8d685"/><rect x="263.98" y="523.80" width="2.20" height="66.00" fill="#f8d685"/><rect x="279.56" y="527.41" width="2.20" height="62.39" fill="#f8d685"/><rect x="295.14" y="475.44" width="2.20" height="114.36" fill="#f8d685"/><rect x="310.72" y="476.24" width="2.20" height="113.56" fill="#f8d685"/><rect x="326.30" y="476.77" width="2.20" height="113.03" fill="#f8d685"/><rect x="341.88" y="512.04" width="2.20" height="77.76" fill="#f8d685"/><rect x="357.46" y="511.91" width="2.20" height="77.89" fill="#f8d685"/><rect x="373.04" y="511.91" width="2.20" height="77.89" fill="#f8d685"/><rect x="388.62" y="511.91" width="2.20" height="77.89" fill="#f8d685"/><rect x="404.20" y="511.91" width="2.20" height="77.89" fill="#f8d685"/><rect x="419.78" y="511.91" width="2.20" height="77.89" fill="#f8d685"/><rect x="435.36" y="511.91" width="2.20" height="77.89" fill="#f8d685"/><rect x="450.94" y="511.91" width="2.20" height="77.89" fill="#f8d685"/><rect x="466.52" y="505.77" width="2.20" height="84.03" fill="#f8d685"/><rect x="482.10" y="502.96" width="2.20" height="86.84" fill="#f8d685"/><rect x="497.68" y="490.54" width="2.20" height="99.26" fill="#f8d685"/><rect x="513.26" y="484.26" width="2.20" height="105.54" fill="#f8d685"/><rect x="528.84" y="544.64" width="2.20" height="45.16" fill="#f8d685"/><rect x="544.42" y="541.04" width="2.20" height="48.76" fill="#f8d685"/><rect x="560.00" y="529.68" width="2.20" height="60.12" fill="#f8d685"/><rect x="575.58" y="526.74" width="2.20" height="63.06" fill="#f8d685"/><rect x="591.16" y="526.74" width="2.20" height="63.06" fill="#f8d685"/><rect x="606.74" y="548.12" width="2.20" height="41.68" fill="#f8d685"/><rect x="622.32" y="549.72" width="2.20" height="40.08" fill="#f8d685"/><rect x="637.90" y="571.36" width="2.20" height="18.44" fill="#f8d685"/><rect x="653.48" y="573.10" width="2.20" height="16.70" fill="#f8d685"/><rect x="669.06" y="580.98" width="2.20" height="8.82" fill="#f8d685"/><rect x="684.64" y="585.66" width="2.20" height="4.14" fill="#f8d685"/><rect x="700.22" y="586.73" width="2.20" height="3.07" fill="#f8d685"/><rect x="172.70" y="582.45" width="2.20" height="7.35" fill="#167d6b"/><rect x="188.28" y="575.77" width="2.20" height="14.03" fill="#167d6b"/><rect x="203.86" y="565.75" width="2.20" height="24.05" fill="#167d6b"/><rect x="219.44" y="553.06" width="2.20" height="36.74" fill="#167d6b"/><rect x="235.02" y="558.14" width="2.20" height="31.66" fill="#167d6b"/><rect x="250.60" y="539.30" width="2.20" height="50.50" fill="#167d6b"/><rect x="408.80" y="589.20" width="2.20" height="0.60" fill="#1f66ae"/><rect x="424.38" y="589.00" width="2.20" height="0.80" fill="#1f66ae"/><rect x="439.96" y="588.60" width="2.20" height="1.20" fill="#1f66ae"/><rect x="455.54" y="586.80" width="2.20" height="3.00" fill="#1f66ae"/><rect x="471.12" y="586.80" width="2.20" height="3.00" fill="#1f66ae"/><rect x="486.70" y="586.80" width="2.20" height="3.00" fill="#1f66ae"/><rect x="502.28" y="582.80" width="2.20" height="7.00" fill="#1f66ae"/><rect x="517.86" y="577.30" width="2.20" height="12.50" fill="#1f66ae"/><rect x="533.44" y="575.80" width="2.20" height="14.00" fill="#1f66ae"/><rect x="549.02" y="572.80" width="2.20" height="17.00" fill="#1f66ae"/><rect x="564.60" y="565.80" width="2.20" height="24.00" fill="#1f66ae"/><rect x="580.18" y="564.10" width="2.20" height="25.70" fill="#1f66ae"/><rect x="595.76" y="562.00" width="2.20" height="27.80" fill="#1f66ae"/><rect x="611.34" y="553.10" width="2.20" height="36.70" fill="#1f66ae"/><rect x="626.92" y="550.60" width="2.20" height="39.20" fill="#1f66ae"/><rect x="642.50" y="553.10" width="2.20" height="36.70" fill="#1f66ae"/><rect x="658.08" y="551.30" width="2.20" height="38.50" fill="#1f66ae"/><rect x="673.66" y="549.80" width="2.20" height="40.00" fill="#1f66ae"/><rect x="689.24" y="554.80" width="2.20" height="35.00" fill="#1f66ae"/><rect x="704.82" y="559.80" width="2.20" height="30.00" fill="#1f66ae"/><rect x="720.40" y="564.80" width="2.20" height="25.00" fill="#1f66ae"/><rect x="735.98" y="567.80" width="2.20" height="22.00" fill="#1f66ae"/><rect x="751.56" y="571.30" width="2.20" height="18.50" fill="#1f66ae"/><rect x="767.14" y="577.30" width="2.20" height="12.50" fill="#1f66ae"/><rect x="782.72" y="578.40" width="2.20" height="11.40" fill="#1f66ae"/><rect x="798.30" y="579.10" width="2.20" height="10.70" fill="#1f66ae"/><rect x="813.88" y="584.50" width="2.20" height="5.30" fill="#1f66ae"/><rect x="829.46" y="585.50" width="2.20" height="4.30" fill="#1f66ae"/><rect x="845.04" y="585.20" width="2.20" height="4.60" fill="#1f66ae"/><rect x="860.62" y="588.00" width="2.20" height="1.80" fill="#1f66ae"/><rect x="876.20" y="588.30" width="2.20" height="1.50" fill="#1f66ae"/><rect x="891.78" y="588.30" width="2.20" height="1.50" fill="#1f66ae"/><path d="M170.2 589.3 L185.8 588.2 L201.4 586.5 L216.9 583.9 L232.5 581.4 L248.1 577.8 L263.7 573.9 L279.3 568.0 L294.8 561.0 L310.4 553.0 L326.0 542.6 L341.6 531.1 L357.2 520.6 L372.7 509.7 L388.3 498.9 L403.9 488.6 L419.5 478.2 L435.1 467.2 L450.6 456.8 L466.2 449.2 L481.8 443.7 L497.4 440.3 L513.0 439.0 L528.5 438.6 L544.1 438.6 L655.0 438.6" fill="none" stroke="#e8a41c" stroke-width="1.5" stroke-linejoin="round"/><path d="M170.2 589.3 L185.8 588.6 L201.4 586.9 L216.9 584.7 L232.5 582.5 L248.1 577.5 L263.7 572.7 L279.3 568.1 L294.8 559.6 L310.4 551.2 L326.0 542.9 L341.6 537.2 L357.2 531.4 L372.7 525.7 L388.3 519.9 L403.9 514.2 L419.5 508.4 L435.1 502.7 L450.6 496.9 L466.2 490.7 L481.8 484.3 L497.4 477.0 L513.0 469.2 L528.5 465.9 L544.1 462.3 L559.7 457.8 L575.3 453.2 L590.9 448.5 L606.4 445.5 L622.0 442.5 L637.6 441.1 L653.2 439.9 L668.8 439.2 L684.3 438.9 L699.9 438.7 L889.0 438.7" fill="none" stroke="#f3c55a" stroke-width="1.2" stroke-linejoin="round"/><path d="M170.2 589.3 L185.8 588.3 L201.4 586.6 L216.9 584.0 L232.5 581.7 L248.1 578.2 L889.0 578.2" fill="none" stroke="#0f7a72" stroke-width="1.5" stroke-linejoin="round"/><path d="M170.2 589.8 L185.8 589.8 L201.4 589.8 L216.9 589.8 L232.5 589.8 L248.1 589.8 L263.7 589.8 L279.3 589.8 L294.8 589.8 L310.4 589.8 L326.0 589.8 L341.6 589.8 L357.2 589.8 L372.7 589.8 L388.3 589.8 L403.9 589.8 L419.5 589.7 L435.1 589.6 L450.6 589.4 L466.2 589.1 L481.8 588.9 L497.4 588.3 L513.0 587.4 L528.5 586.3 L544.1 584.9 L559.7 583.1 L575.3 581.0 L590.9 578.9 L606.4 576.0 L622.0 572.9 L637.6 570.0 L653.2 567.0 L668.8 563.9 L684.3 561.1 L699.9 558.8 L715.5 556.8 L731.1 555.1 L746.7 553.7 L762.2 552.7 L777.8 551.8 L793.4 550.9 L809.0 550.5 L824.6 550.2 L840.1 549.8 L855.7 549.7 L871.3 549.6 L886.9 549.5 L889.0 549.5" fill="none" stroke="#1f66ae" stroke-width="2.4" stroke-linejoin="round"/></g><rect x="163" y="623.3" width="749.7" height="23.00" fill="#fff"/><g transform="translate(0 646.3) scale(1 0.1511) translate(0 -589.8)"><g clip-path="url(#plotclip)"><rect x="166.20" y="582.49" width="2.20" height="7.31" fill="#161f4c"/><rect x="181.78" y="575.52" width="2.20" height="14.28" fill="#161f4c"/><rect x="197.36" y="566.42" width="2.20" height="23.38" fill="#161f4c"/><rect x="212.94" y="554.26" width="2.20" height="35.54" fill="#161f4c"/><rect x="228.52" y="557.03" width="2.20" height="32.77" fill="#161f4c"/><rect x="244.10" y="540.37" width="2.20" height="49.43" fill="#161f4c"/><rect x="259.68" y="537.30" width="2.20" height="52.50" fill="#161f4c"/><rect x="275.26" y="509.83" width="2.20" height="79.97" fill="#161f4c"/><rect x="290.84" y="494.81" width="2.20" height="94.99" fill="#161f4c"/><rect x="306.42" y="481.32" width="2.20" height="108.48" fill="#161f4c"/><rect x="322.00" y="448.76" width="2.20" height="141.04" fill="#161f4c"/><rect x="337.58" y="437.60" width="2.20" height="152.20" fill="#161f4c"/><rect x="353.16" y="447.78" width="2.20" height="142.02" fill="#161f4c"/><rect x="368.74" y="442.17" width="2.20" height="147.63" fill="#161f4c"/><rect x="384.32" y="442.84" width="2.20" height="146.96" fill="#161f4c"/><rect x="399.90" y="450.72" width="2.20" height="139.08" fill="#161f4c"/><rect x="415.48" y="448.18" width="2.20" height="141.62" fill="#161f4c"/><rect x="431.06" y="441.37" width="2.20" height="148.43" fill="#161f4c"/><rect x="446.64" y="449.39" width="2.20" height="140.41" fill="#161f4c"/><rect x="462.22" y="485.59" width="2.20" height="104.21" fill="#161f4c"/><rect x="477.80" y="515.79" width="2.20" height="74.01" fill="#161f4c"/><rect x="493.38" y="543.57" width="2.20" height="46.23" fill="#161f4c"/><rect x="508.96" y="571.90" width="2.20" height="17.90" fill="#161f4c"/><rect x="524.54" y="579.11" width="2.20" height="10.69" fill="#161f4c"/><rect x="540.12" y="587.40" width="2.20" height="2.40" fill="#161f4c"/><rect x="168.40" y="582.49" width="2.20" height="7.31" fill="#e8a41c"/><rect x="183.98" y="575.52" width="2.20" height="14.28" fill="#e8a41c"/><rect x="199.56" y="566.42" width="2.20" height="23.38" fill="#e8a41c"/><rect x="215.14" y="554.26" width="2.20" height="35.54" fill="#e8a41c"/><rect x="230.72" y="557.03" width="2.20" height="32.77" fill="#e8a41c"/><rect x="246.30" y="540.37" width="2.20" height="49.43" fill="#e8a41c"/><rect x="261.88" y="537.30" width="2.20" height="52.50" fill="#e8a41c"/><rect x="277.46" y="509.83" width="2.20" height="79.97" fill="#e8a41c"/><rect x="293.04" y="494.81" width="2.20" height="94.99" fill="#e8a41c"/><rect x="308.62" y="481.32" width="2.20" height="108.48" fill="#e8a41c"/><rect x="324.20" y="448.76" width="2.20" height="141.04" fill="#e8a41c"/><rect x="339.78" y="437.60" width="2.20" height="152.20" fill="#e8a41c"/><rect x="355.36" y="447.78" width="2.20" height="142.02" fill="#e8a41c"/><rect x="370.94" y="442.17" width="2.20" height="147.63" fill="#e8a41c"/><rect x="386.52" y="442.84" width="2.20" height="146.96" fill="#e8a41c"/><rect x="402.10" y="450.72" width="2.20" height="139.08" fill="#e8a41c"/><rect x="417.68" y="448.18" width="2.20" height="141.62" fill="#e8a41c"/><rect x="433.26" y="441.37" width="2.20" height="148.43" fill="#e8a41c"/><rect x="448.84" y="449.39" width="2.20" height="140.41" fill="#e8a41c"/><rect x="464.42" y="485.59" width="2.20" height="104.21" fill="#e8a41c"/><rect x="480.00" y="515.79" width="2.20" height="74.01" fill="#e8a41c"/><rect x="495.58" y="543.57" width="2.20" height="46.23" fill="#e8a41c"/><rect x="511.16" y="571.90" width="2.20" height="17.90" fill="#e8a41c"/><rect x="526.74" y="579.11" width="2.20" height="10.69" fill="#e8a41c"/><rect x="542.32" y="587.40" width="2.20" height="2.40" fill="#e8a41c"/><rect x="170.50" y="582.88" width="2.20" height="6.92" fill="#f8d685"/><rect x="186.08" y="580.70" width="2.20" height="9.10" fill="#f8d685"/><rect x="201.66" y="566.42" width="2.20" height="23.38" fill="#f8d685"/><rect x="217.24" y="560.14" width="2.20" height="29.66" fill="#f8d685"/><rect x="232.82" y="560.54" width="2.20" height="29.26" fill="#f8d685"/><rect x="248.40" y="522.06" width="2.20" height="67.74" fill="#f8d685"/><rect x="263.98" y="523.80" width="2.20" height="66.00" fill="#f8d685"/><rect x="279.56" y="527.41" width="2.20" height="62.39" fill="#f8d685"/><rect x="295.14" y="475.44" width="2.20" height="114.36" fill="#f8d685"/><rect x="310.72" y="476.24" width="2.20" height="113.56" fill="#f8d685"/><rect x="326.30" y="476.77" width="2.20" height="113.03" fill="#f8d685"/><rect x="341.88" y="512.04" width="2.20" height="77.76" fill="#f8d685"/><rect x="357.46" y="511.91" width="2.20" height="77.89" fill="#f8d685"/><rect x="373.04" y="511.91" width="2.20" height="77.89" fill="#f8d685"/><rect x="388.62" y="511.91" width="2.20" height="77.89" fill="#f8d685"/><rect x="404.20" y="511.91" width="2.20" height="77.89" fill="#f8d685"/><rect x="419.78" y="511.91" width="2.20" height="77.89" fill="#f8d685"/><rect x="435.36" y="511.91" width="2.20" height="77.89" fill="#f8d685"/><rect x="450.94" y="511.91" width="2.20" height="77.89" fill="#f8d685"/><rect x="466.52" y="505.77" width="2.20" height="84.03" fill="#f8d685"/><rect x="482.10" y="502.96" width="2.20" height="86.84" fill="#f8d685"/><rect x="497.68" y="490.54" width="2.20" height="99.26" fill="#f8d685"/><rect x="513.26" y="484.26" width="2.20" height="105.54" fill="#f8d685"/><rect x="528.84" y="544.64" width="2.20" height="45.16" fill="#f8d685"/><rect x="544.42" y="541.04" width="2.20" height="48.76" fill="#f8d685"/><rect x="560.00" y="529.68" width="2.20" height="60.12" fill="#f8d685"/><rect x="575.58" y="526.74" width="2.20" height="63.06" fill="#f8d685"/><rect x="591.16" y="526.74" width="2.20" height="63.06" fill="#f8d685"/><rect x="606.74" y="548.12" width="2.20" height="41.68" fill="#f8d685"/><rect x="622.32" y="549.72" width="2.20" height="40.08" fill="#f8d685"/><rect x="637.90" y="571.36" width="2.20" height="18.44" fill="#f8d685"/><rect x="653.48" y="573.10" width="2.20" height="16.70" fill="#f8d685"/><rect x="669.06" y="580.98" width="2.20" height="8.82" fill="#f8d685"/><rect x="684.64" y="585.66" width="2.20" height="4.14" fill="#f8d685"/><rect x="700.22" y="586.73" width="2.20" height="3.07" fill="#f8d685"/><rect x="172.70" y="582.45" width="2.20" height="7.35" fill="#167d6b"/><rect x="188.28" y="575.77" width="2.20" height="14.03" fill="#167d6b"/><rect x="203.86" y="565.75" width="2.20" height="24.05" fill="#167d6b"/><rect x="219.44" y="553.06" width="2.20" height="36.74" fill="#167d6b"/><rect x="235.02" y="558.14" width="2.20" height="31.66" fill="#167d6b"/><rect x="250.60" y="539.30" width="2.20" height="50.50" fill="#167d6b"/><rect x="408.80" y="589.20" width="2.20" height="0.60" fill="#1f66ae"/><rect x="424.38" y="589.00" width="2.20" height="0.80" fill="#1f66ae"/><rect x="439.96" y="588.60" width="2.20" height="1.20" fill="#1f66ae"/><rect x="455.54" y="586.80" width="2.20" height="3.00" fill="#1f66ae"/><rect x="471.12" y="586.80" width="2.20" height="3.00" fill="#1f66ae"/><rect x="486.70" y="586.80" width="2.20" height="3.00" fill="#1f66ae"/><rect x="502.28" y="582.80" width="2.20" height="7.00" fill="#1f66ae"/><rect x="517.86" y="577.30" width="2.20" height="12.50" fill="#1f66ae"/><rect x="533.44" y="575.80" width="2.20" height="14.00" fill="#1f66ae"/><rect x="549.02" y="572.80" width="2.20" height="17.00" fill="#1f66ae"/><rect x="564.60" y="565.80" width="2.20" height="24.00" fill="#1f66ae"/><rect x="580.18" y="564.10" width="2.20" height="25.70" fill="#1f66ae"/><rect x="595.76" y="562.00" width="2.20" height="27.80" fill="#1f66ae"/><rect x="611.34" y="553.10" width="2.20" height="36.70" fill="#1f66ae"/><rect x="626.92" y="550.60" width="2.20" height="39.20" fill="#1f66ae"/><rect x="642.50" y="553.10" width="2.20" height="36.70" fill="#1f66ae"/><rect x="658.08" y="551.30" width="2.20" height="38.50" fill="#1f66ae"/><rect x="673.66" y="549.80" width="2.20" height="40.00" fill="#1f66ae"/><rect x="689.24" y="554.80" width="2.20" height="35.00" fill="#1f66ae"/><rect x="704.82" y="559.80" width="2.20" height="30.00" fill="#1f66ae"/><rect x="720.40" y="564.80" width="2.20" height="25.00" fill="#1f66ae"/><rect x="735.98" y="567.80" width="2.20" height="22.00" fill="#1f66ae"/><rect x="751.56" y="571.30" width="2.20" height="18.50" fill="#1f66ae"/><rect x="767.14" y="577.30" width="2.20" height="12.50" fill="#1f66ae"/><rect x="782.72" y="578.40" width="2.20" height="11.40" fill="#1f66ae"/><rect x="798.30" y="579.10" width="2.20" height="10.70" fill="#1f66ae"/><rect x="813.88" y="584.50" width="2.20" height="5.30" fill="#1f66ae"/><rect x="829.46" y="585.50" width="2.20" height="4.30" fill="#1f66ae"/><rect x="845.04" y="585.20" width="2.20" height="4.60" fill="#1f66ae"/><rect x="860.62" y="588.00" width="2.20" height="1.80" fill="#1f66ae"/><rect x="876.20" y="588.30" width="2.20" height="1.50" fill="#1f66ae"/><rect x="891.78" y="588.30" width="2.20" height="1.50" fill="#1f66ae"/><path vector-effect="non-scaling-stroke" d="M170.2 589.3 L185.8 588.2 L201.4 586.5 L216.9 583.9 L232.5 581.4 L248.1 577.8 L263.7 573.9 L279.3 568.0 L294.8 561.0 L310.4 553.0 L326.0 542.6 L341.6 531.1 L357.2 520.6 L372.7 509.7 L388.3 498.9 L403.9 488.6 L419.5 478.2 L435.1 467.2 L450.6 456.8 L466.2 449.2 L481.8 443.7 L497.4 440.3 L513.0 439.0 L528.5 438.6 L544.1 438.6 L889.0 438.6" fill="none" stroke="#e8a41c" stroke-width="1.7" stroke-linejoin="round"/><path vector-effect="non-scaling-stroke" d="M170.2 589.3 L185.8 588.6 L201.4 586.9 L216.9 584.7 L232.5 582.5 L248.1 577.5 L263.7 572.7 L279.3 568.1 L294.8 559.6 L310.4 551.2 L326.0 542.9 L341.6 537.2 L357.2 531.4 L372.7 525.7 L388.3 519.9 L403.9 514.2 L419.5 508.4 L435.1 502.7 L450.6 496.9 L466.2 490.7 L481.8 484.3 L497.4 477.0 L513.0 469.2 L528.5 465.9 L544.1 462.3 L559.7 457.8 L575.3 453.2 L590.9 448.5 L606.4 445.5 L622.0 442.5 L637.6 441.1 L653.2 439.9 L668.8 439.2 L684.3 438.9 L699.9 438.7 L889.0 438.7" fill="none" stroke="#f3c55a" stroke-width="1.3" stroke-linejoin="round"/><path vector-effect="non-scaling-stroke" d="M170.2 589.3 L185.8 588.3 L201.4 586.6 L216.9 584.0 L232.5 581.7 L248.1 578.2 L889.0 578.2" fill="none" stroke="#0f7a72" stroke-width="1.7" stroke-linejoin="round"/><path vector-effect="non-scaling-stroke" d="M170.2 589.8 L185.8 589.8 L201.4 589.8 L216.9 589.8 L232.5 589.8 L248.1 589.8 L263.7 589.8 L279.3 589.8 L294.8 589.8 L310.4 589.8 L326.0 589.8 L341.6 589.8 L357.2 589.8 L372.7 589.8 L388.3 589.8 L403.9 589.8 L419.5 589.7 L435.1 589.6 L450.6 589.4 L466.2 589.1 L481.8 588.9 L497.4 588.3 L513.0 587.4 L528.5 586.3 L544.1 584.9 L559.7 583.1 L575.3 581.0 L590.9 578.9 L606.4 576.0 L622.0 572.9 L637.6 570.0 L653.2 567.0 L668.8 563.9 L684.3 561.1 L699.9 558.8 L715.5 556.8 L731.1 555.1 L746.7 553.7 L762.2 552.7 L777.8 551.8 L793.4 550.9 L809.0 550.5 L824.6 550.2 L840.1 549.8 L855.7 549.7 L871.3 549.6 L886.9 549.5 L889.0 549.5" fill="none" stroke="#1f66ae" stroke-width="1.6" stroke-linejoin="round"/></g></g><rect x="163" y="637.6" width="749.7" height="8.70" fill="#fff" opacity="0.86"/><path d="M163 637.6H912.7" stroke="#dfe3ea" stroke-width="0.8"/><rect x="163" y="623.3" width="749.7" height="23.00" fill="none" stroke="#c9cfd9" stroke-width="0.9"/><path d="M170 646.3H395" stroke="#9cc3e0" stroke-width="1.2"/><rect x="160.4" y="626.3" width="3.2" height="17.2" rx="1.4" fill="#3f4466"/><rect x="911.8" y="626.3" width="3.2" height="17.2" rx="1.4" fill="#3f4466"/></svg>
<div class="t " style="top:569.00px;font-size:8.8px;right:1003.70px;color:#3a3d55;letter-spacing:-0.1px">$0.00</div>
<div class="t " style="top:555.70px;font-size:8.8px;right:1003.70px;color:#3a3d55;letter-spacing:-0.1px">$100,000.00</div>
<div class="t " style="top:542.40px;font-size:8.8px;right:1003.70px;color:#3a3d55;letter-spacing:-0.1px">$200,000.00</div>
<div class="t " style="top:529.10px;font-size:8.8px;right:1003.70px;color:#3a3d55;letter-spacing:-0.1px">$300,000.00</div>
<div class="t " style="top:515.80px;font-size:8.8px;right:1003.70px;color:#3a3d55;letter-spacing:-0.1px">$400,000.00</div>
<div class="t " style="top:502.50px;font-size:8.8px;right:1003.70px;color:#3a3d55;letter-spacing:-0.1px">$500,000.00</div>
<div class="t " style="top:489.20px;font-size:8.8px;right:1003.70px;color:#3a3d55;letter-spacing:-0.1px">$600,000.00</div>
<div class="t " style="top:475.90px;font-size:8.8px;right:1003.70px;color:#3a3d55;letter-spacing:-0.1px">$700,000.00</div>
<div class="t " style="top:462.60px;font-size:8.8px;right:1003.70px;color:#3a3d55;letter-spacing:-0.1px">$800,000.00</div>
<div class="t " style="top:449.30px;font-size:8.8px;right:1003.70px;color:#3a3d55;letter-spacing:-0.1px">$900,000.00</div>
<div class="t " style="top:436.00px;font-size:8.8px;right:1003.70px;color:#3a3d55;letter-spacing:-0.1px">$1,000,000.00</div>
<div class="t " style="top:422.70px;font-size:8.8px;right:1003.70px;color:#3a3d55;letter-spacing:-0.1px">$1,100,000.00</div>
<div class="t " style="top:569.00px;font-size:8.8px;left:886.20px;color:#3a3d55;letter-spacing:-0.15px">$0.00</div>
<div class="t " style="top:549.28px;font-size:8.8px;left:886.20px;color:#3a3d55;letter-spacing:-0.15px">$2,000,000.00</div>
<div class="t " style="top:529.56px;font-size:8.8px;left:886.20px;color:#3a3d55;letter-spacing:-0.15px">$4,000,000.00</div>
<div class="t " style="top:509.84px;font-size:8.8px;left:886.20px;color:#3a3d55;letter-spacing:-0.15px">$6,000,000.00</div>
<div class="t " style="top:490.12px;font-size:8.8px;left:886.20px;color:#3a3d55;letter-spacing:-0.15px">$8,000,000.00</div>
<div class="t " style="top:470.40px;font-size:8.8px;left:886.20px;color:#3a3d55;letter-spacing:-0.15px">$10,000,000.00</div>
<div class="t " style="top:450.68px;font-size:8.8px;left:886.20px;color:#3a3d55;letter-spacing:-0.15px">$12,000,000.00</div>
<div class="t " style="top:430.96px;font-size:8.8px;left:886.20px;color:#3a3d55;letter-spacing:-0.15px">$14,000,000.00</div>
<div class="t " style="top:582.40px;font-size:8.6px;left:300.90px;color:#3a3d55;letter-spacing:-0.2px">2024</div>
<div class="t " style="top:582.40px;font-size:8.6px;left:488.30px;color:#3a3d55;letter-spacing:-0.2px">2025</div>
<div class="t " style="top:582.40px;font-size:8.6px;left:675.70px;color:#3a3d55;letter-spacing:-0.2px">2026</div>
<div class="t " style="top:582.40px;font-size:8.6px;left:863.20px;color:#3a3d55;letter-spacing:-0.2px">2027</div>
<div class="t" style="left:37.8px;top:491.5px;width:40px;text-align:center;font-size:9.3px;color:#444;transform:rotate(-90deg)">Cost</div>
<div class="t" style="left:939.5px;top:491.5px;width:40px;text-align:center;font-size:8.6px;color:#444;transform:rotate(90deg)">Total</div>
<div class="abs" style="left:988.6px;top:479.0px;width:6px;height:6px;border-radius:50%;background:#161f4c"></div>
<div class="t " style="top:478.10px;font-size:8.6px;letter-spacing:-0.014px;left:1004.40px;color:#333">Portfolio Approved Budget</div>
<div class="abs" style="left:988.6px;top:496.45000000000005px;width:6px;height:6px;border-radius:50%;background:#e8a41c"></div>
<div class="t " style="top:495.55px;font-size:8.6px;letter-spacing:-0.170px;left:1004.40px;color:#333">Planned Budget</div>
<div class="abs" style="left:988.6px;top:513.9px;width:6px;height:6px;border-radius:50%;background:#f8d685"></div>
<div class="t " style="top:513.00px;font-size:8.6px;letter-spacing:-0.279px;left:1004.40px;color:#333">Forecast</div>
<div class="abs" style="left:988.6px;top:531.35px;width:6px;height:6px;border-radius:50%;background:#167d6b"></div>
<div class="t " style="top:530.45px;font-size:8.6px;letter-spacing:-0.200px;left:1004.40px;color:#333">Actuals</div>
<div class="abs" style="left:988.6px;top:548.8px;width:6px;height:6px;border-radius:50%;background:#1f66ae"></div>
<div class="t " style="top:547.90px;font-size:8.6px;letter-spacing:0.061px;left:1004.40px;color:#333">Benefits</div>
</div></body></html>
